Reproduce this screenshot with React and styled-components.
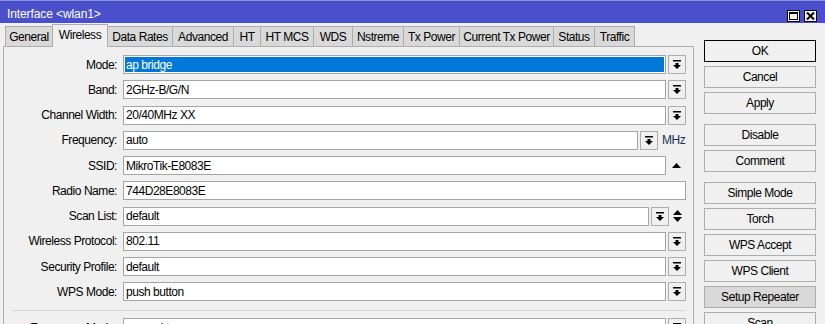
import React from "react";
import styled, { createGlobalStyle } from "styled-components";

const GlobalStyle = createGlobalStyle`
  html, body {
    margin: 0;
    background: #f0f0f0;
  }
  body {
    font-family: "Liberation Sans", Arial, sans-serif;
    font-size: 12px;
    letter-spacing: -0.45px;
    color: #000;
  }
`;

const tabs = [
  { name: "General", width: 48 },
  { name: "Wireless", width: 56, active: true },
  { name: "Data Rates", width: 66 },
  { name: "Advanced", width: 62 },
  { name: "HT", width: 28 },
  { name: "HT MCS", width: 54 },
  { name: "WDS", width: 40 },
  { name: "Nstreme", width: 52 },
  { name: "Tx Power", width: 57 },
  { name: "Current Tx Power", width: 95 },
  { name: "Status", width: 42 },
  { name: "Traffic", width: 41 }
];

const rows = [
  { label: "Mode", value: "ap bridge", drop: true, selected: true },
  { label: "Band", value: "2GHz-B/G/N", drop: true },
  { label: "Channel Width", value: "20/40MHz XX", drop: true },
  { label: "Frequency", value: "auto", drop: true, unit: "MHz" },
  { label: "SSID", value: "MikroTik-E8083E", mark: "up" },
  { label: "Radio Name", value: "744D28E8083E" },
  { label: "Scan List", value: "default", drop: true, mark: "updown" },
  { label: "Wireless Protocol", value: "802.11", drop: true },
  { label: "Security Profile", value: "default", drop: true },
  { label: "WPS Mode", value: "push button", drop: true }
];

const buttonGroups = [
  ["OK", "Cancel", "Apply"],
  ["Disable", "Comment"],
  ["Simple Mode", "Torch", "WPS Accept", "WPS Client", "Setup Repeater", "Scan"]
];

const DropIcon = () => (
  <svg width="8" height="9" viewBox="0 0 8 9">
    <rect x="0" y="0" width="8" height="1.5" fill="#000" />
    <rect x="2.5" y="3" width="3" height="2" fill="#000" />
    <polygon points="0,5 8,5 4,9" fill="#000" />
  </svg>
);

const UpIcon = () => (
  <svg width="9" height="5" viewBox="0 0 9 5">
    <polygon points="0,5 9,5 4.5,0" fill="#000" />
  </svg>
);

const UpDownIcon = () => (
  <svg width="9" height="12" viewBox="0 0 9 12">
    <polygon points="0,5 9,5 4.5,0" fill="#000" />
    <polygon points="0,7 9,7 4.5,12" fill="#000" />
  </svg>
);

const FormRow = ({ row }) => (
  <Row>
    <Label>{row.label}:</Label>
    <Field>
      {row.selected ? <Selected>{row.value}</Selected> : row.value}
    </Field>
    {row.drop && (
      <DropButton>
        <DropIcon />
      </DropButton>
    )}
    {row.unit && <Unit>{row.unit}</Unit>}
    {row.mark === "up" && (
      <Mark $width={20}>
        <UpIcon />
      </Mark>
    )}
    {row.mark === "updown" && (
      <Mark $width={17}>
        <UpDownIcon />
      </Mark>
    )}
  </Row>
);

export default function App() {
  return (
    <Window>
      <GlobalStyle />
      <TitleBar>
        <Title>Interface &lt;wlan1&gt;</Title>
        <TitleButtons>
          <WinButton>
            <svg width="9" height="8" viewBox="0 0 9 8">
              <rect x="0.5" y="0.5" width="8" height="7" fill="none" stroke="#000" />
              <rect x="0" y="0" width="9" height="2" fill="#000" />
            </svg>
          </WinButton>
          <WinButton>
            <svg width="9" height="8" viewBox="0 0 9 8">
              <path d="M1 0.5 L8 7.5 M8 0.5 L1 7.5" stroke="#000" strokeWidth="2" />
            </svg>
          </WinButton>
        </TitleButtons>
      </TitleBar>
      <Body>
        <Main>
          <TabStrip>
            {tabs.map(t => (
              <Tab key={t.name} $width={t.width} $active={t.active}>
                {t.name}
              </Tab>
            ))}
          </TabStrip>
          <Panel>
            <Form>
              {rows.map(r => (
                <FormRow key={r.label} row={r} />
              ))}
            </Form>
            <Separator />
            <FormRow row={{ label: "Frequency Mode", value: "manual-txpower", drop: true }} />
          </Panel>
        </Main>
        <Side>
          {buttonGroups.map((group, i) => (
            <ButtonGroup key={i}>
              {group.map(b => (
                <SideButton key={b} $default={b === "OK"} $hover={b === "Setup Repeater"}>
                  {b}
                </SideButton>
              ))}
            </ButtonGroup>
          ))}
        </Side>
      </Body>
    </Window>
  );
}

const Window = styled.div`
  width: 825px;
  height: 324px;
  overflow: hidden;
  background: #f0f0f0;
`;

const TitleBar = styled.div`
  height: 23px;
  box-sizing: border-box;
  display: flex;
  align-items: center;
  justify-content: space-between;
  padding: 3px 8px 0 7px;
  background: #4a4fcb;
  border-top: 1px solid #8d90dc;
`;

const Title = styled.div`
  color: #fff;
  font-size: 12px;
  letter-spacing: -0.1px;
`;

const TitleButtons = styled.div`
  display: flex;
  gap: 4px;
  margin-top: 4px;
`;

const WinButton = styled.div`
  width: 13px;
  height: 12px;
  box-sizing: border-box;
  border: 1px solid #000;
  background: #f0f0f0;
  display: flex;
  align-items: center;
  justify-content: center;
`;

const Body = styled.div`
  display: flex;
  align-items: flex-start;
`;

const Main = styled.div`
  width: 691px;
  margin-left: 3px;
`;

const TabStrip = styled.div`
  height: 23px;
  display: flex;
  align-items: flex-end;
  padding-left: 2px;
`;

const Tab = styled.div`
  position: relative;
  width: ${p => p.$width}px;
  height: ${p => (p.$active ? 23 : 20)}px;
  margin-bottom: ${p => (p.$active ? -1 : 0)}px;
  box-sizing: border-box;
  margin-left: -1px;
  &:first-child {
    margin-left: 0;
  }
  border: 1px solid #adadad;
  border-bottom: none;
  background: ${p => (p.$active ? "#f0f0f0" : "#d9d9d9")};
  z-index: ${p => (p.$active ? 1 : 0)};
  display: flex;
  align-items: center;
  justify-content: center;
  padding-bottom: ${p => (p.$active ? 3 : 0)}px;
  white-space: nowrap;
`;

const Panel = styled.div`
  border: 1px solid #adadad;
  border-bottom: none;
  height: 300px;
  padding: 8px 7px 0 0;
`;

const Form = styled.div`
  display: flex;
  flex-direction: column;
  gap: 6.25px;
`;

const Row = styled.div`
  display: flex;
  align-items: center;
  height: 19px;
`;

const Label = styled.div`
  width: 113px;
  margin-right: 6px;
  text-align: right;
  white-space: nowrap;
  flex-shrink: 0;
`;

const Field = styled.div`
  flex: 1;
  height: 19px;
  box-sizing: border-box;
  border: 1px solid #a5a5a5;
  background: #fff;
  padding: 0 2px;
  display: flex;
  align-items: center;
  white-space: nowrap;
  overflow: hidden;
`;

const Selected = styled.div`
  flex: 1;
  align-self: stretch;
  margin: 1px -1px;
  padding: 0 1px;
  background: #0078d7;
  color: #fff;
  display: flex;
  align-items: center;
`;

const DropButton = styled.div`
  width: 18px;
  height: 19px;
  margin-left: 2px;
  box-sizing: border-box;
  border: 1px solid #adadad;
  background: #f0f0f0;
  display: flex;
  align-items: center;
  justify-content: center;
  flex-shrink: 0;
`;

const Unit = styled.div`
  width: 28px;
  padding-left: 4px;
  box-sizing: border-box;
  color: #1c2f5a;
  flex-shrink: 0;
`;

const Mark = styled.div`
  width: ${p => p.$width}px;
  display: flex;
  justify-content: center;
  flex-shrink: 0;
`;

const Separator = styled.div`
  height: 1px;
  background: #d7d7d7;
  margin: 9px 0 7px 8px;
`;

const Side = styled.div`
  width: 112px;
  margin-left: 10px;
  padding-top: 17px;
  display: flex;
  flex-direction: column;
  gap: 10px;
`;

const ButtonGroup = styled.div`
  display: flex;
  flex-direction: column;
  gap: 4px;
`;

const SideButton = styled.div`
  height: 22px;
  box-sizing: border-box;
  border: 1px solid ${p => (p.$default ? "#000" : "#adadad")};
  background: ${p => (p.$hover ? "#d9d9d9" : "#f0f0f0")};
  display: flex;
  align-items: center;
  justify-content: center;
  white-space: nowrap;
`;
